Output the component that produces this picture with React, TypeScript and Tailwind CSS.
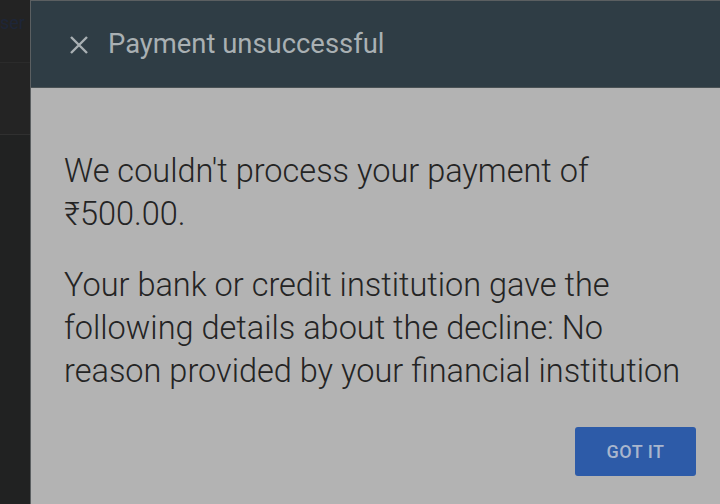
import React from "react";

export default function App() {
  return (
    <div className="w-[720px] h-[504px] flex bg-[#232323] overflow-hidden" style={{ fontFamily: "Roboto, 'Liberation Sans', sans-serif" }}>
      <div className="w-[30px] shrink-0 flex flex-col">
        <div className="h-[63px] border-b border-[#2b2b2b] relative overflow-hidden">
          <span className="absolute left-0 top-[14px] text-[18px] text-[#1e2638] leading-none">ser</span>
        </div>
        <div className="h-[72px] border-b border-[#303030] bg-[#242424]"></div>
        <div className="flex-1 bg-[#212222]"></div>
      </div>
      <div className="flex-1 min-w-0 flex flex-col border-l border-t border-[#5b5f61]">
        <div className="h-[87px] bg-[#2f3d45] flex items-center pl-[38px] pt-[1px] border-b border-[#4a5255]">
          <svg width="20" height="20" viewBox="0 0 20 20" className="shrink-0">
            <path d="M2 2 L18 18 M18 2 L2 18" stroke="#a9b0b3" strokeWidth="2.4" />
          </svg>
          <span className="ml-[19px] text-[27.4px] text-[#a9b0b3] leading-none">Payment unsuccessful</span>
        </div>
        <div className="flex-1 min-w-0 overflow-hidden bg-[#b3b3b3] flex flex-col pl-[33px] pr-[24px]">
          <p className="mt-[62px] text-[32.5px] font-light leading-[43px] text-[#242424] whitespace-nowrap">
            We couldn't process your payment of<br />₹500.00.
          </p>
          <p className="mt-[28px] text-[32.5px] font-light leading-[43px] text-[#242424] whitespace-nowrap">
            Your bank or credit institution gave the<br />following details about the decline: No<br />reason provided by your financial institution
          </p>
          <div className="flex justify-end mt-[34px]">
            <button className="w-[121px] h-[49px] rounded-[3px] bg-[#2d5ba8] text-[#a9b6cd] text-[18px] font-medium tracking-[0.5px]">
              GOT IT
            </button>
          </div>
        </div>
      </div>
    </div>
  );
}
